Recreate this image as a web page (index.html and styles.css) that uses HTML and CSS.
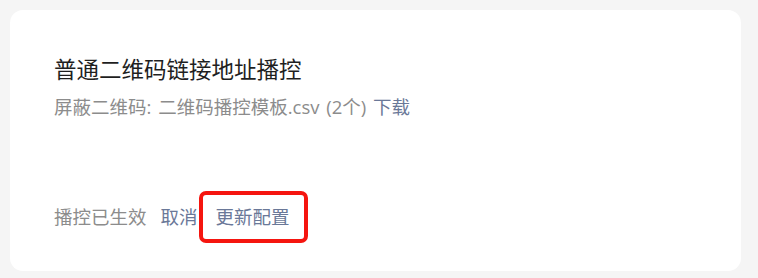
FILE: index.html
```html
<!DOCTYPE html>
<html lang="zh-CN">
<head>
<meta charset="utf-8">
<link rel="stylesheet" href="styles.css">
</head>
<body>
<div class="card">
  <div class="title">普通二维码链接地址播控</div>
  <div class="sub">屏蔽二维码: 二维码播控模板.csv (2个) <a class="link">下载</a></div>
  <div class="actions">
    <span class="status">播控已生效</span>
    <a class="link act">取消</a>
    <a class="link act highlight">更新配置</a>
  </div>
</div>
</body>
</html>
```
FILE: styles.css
```css
html, body {
  margin: 0;
  padding: 0;
  background: #f5f5f5;
  font-family: "Open Sans", "Noto Sans CJK SC", sans-serif;
}
body {
  padding: 10px 17px 7px 10px;
  height: 278px;
  box-sizing: border-box;
}
.card {
  background: #fff;
  border-radius: 13px;
  height: 261px;
  box-sizing: border-box;
  padding: 45px 44px 0 44px;
  display: flex;
  flex-direction: column;
}
.title {
  font-size: 22.5px;
  line-height: 30px;
  color: #1f1f1f;
}
.sub {
  margin-top: 10px;
  font-size: 18.5px;
  line-height: 24px;
  word-spacing: 2px;
  color: #8c8c8c;
}
.link {
  color: #6a7898;
  cursor: pointer;
}
.actions {
  margin-top: 72px;
  display: flex;
  align-items: center;
  font-size: 18.5px;
  line-height: 24px;
}
.status {
  color: #8c8c8c;
}
.act {
  margin-left: 14px;
}
.highlight {
  margin-left: 1px;
  border: 4px solid #f5150f;
  border-radius: 7px;
  padding: 10px 14px 10px 13px;
}
```
